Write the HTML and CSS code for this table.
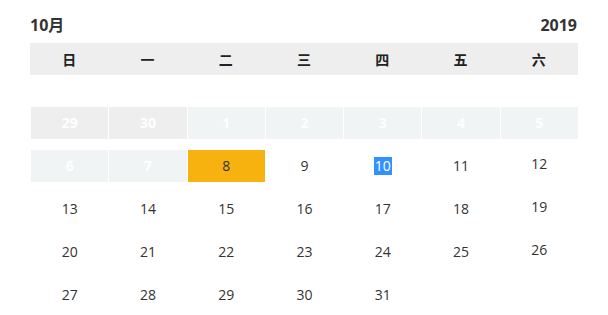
FILE: index.html
```html
<!DOCTYPE html>
<html lang="zh">
<head>
<meta charset="utf-8">
<link rel="stylesheet" href="styles.css">
</head>
<body>
<div class="cal">
  <div class="title">
    <span class="month">10月</span>
    <span class="year">2019</span>
  </div>
  <div class="week">
    <div>日</div><div>一</div><div>二</div><div>三</div><div>四</div><div>五</div><div>六</div>
  </div>
  <div class="days">
    <div class="d other">29</div>
    <div class="d other">30</div>
    <div class="d past">1</div>
    <div class="d past">2</div>
    <div class="d past">3</div>
    <div class="d past">4</div>
    <div class="d past">5</div>

    <div class="d past">6</div>
    <div class="d past">7</div>
    <div class="d today">8</div>
    <div class="d">9</div>
    <div class="d"><span class="sel">10</span></div>
    <div class="d">11</div>
    <div class="d sat">12</div>

    <div class="d">13</div>
    <div class="d">14</div>
    <div class="d">15</div>
    <div class="d">16</div>
    <div class="d">17</div>
    <div class="d">18</div>
    <div class="d sat">19</div>

    <div class="d">20</div>
    <div class="d">21</div>
    <div class="d">22</div>
    <div class="d">23</div>
    <div class="d">24</div>
    <div class="d">25</div>
    <div class="d sat">26</div>

    <div class="d">27</div>
    <div class="d">28</div>
    <div class="d">29</div>
    <div class="d">30</div>
    <div class="d">31</div>
    <div class="d"></div>
    <div class="d"></div>
  </div>
</div>
</body>
</html>
```

FILE: styles.css
```css
html, body {
  margin: 0;
  padding: 0;
  background: #ffffff;
}

body {
  font-family: "Open Sans", "Noto Sans CJK SC", sans-serif;
  color: #333333;
}

.cal {
  margin: 0 30px;
  padding-top: 13px;
}

.title {
  display: flex;
  justify-content: space-between;
  align-items: center;
  height: 24px;
  margin-bottom: 6px;
  font-size: 16px;
  font-weight: 700;
  line-height: 24px;
  color: #333333;
}

.month {
  font-family: "Open Sans", "Noto Sans CJK SC", sans-serif;
}

.year {
  margin-right: 1px;
}

.week {
  display: grid;
  grid-template-columns: repeat(7, 1fr);
  height: 32px;
  background: #eeeeee;
  font-family: "Noto Sans CJK SC", sans-serif;
  font-size: 14px;
  font-weight: 700;
  color: #222222;
}

.week div {
  display: flex;
  align-items: center;
  justify-content: center;
}

.days {
  display: grid;
  grid-template-columns: repeat(7, 1fr);
  grid-auto-rows: 32px;
  row-gap: 11px;
  margin-top: 32px;
  font-size: 14px;
}

.d {
  display: flex;
  align-items: center;
  justify-content: center;
  border-left: 1px solid #ffffff;
  color: #333333;
  line-height: 18px;
}

.d.other {
  background: #eeeeee;
  color: #ffffff;
  font-weight: 700;
}

.d.past {
  background: #f1f4f5;
  color: #ffffff;
  font-weight: 700;
}

.d.today {
  background: #f7b20f;
  color: #333333;
}

.d.sat {
  padding-bottom: 5px;
  box-sizing: border-box;
}

.sel {
  background: #3390ff;
  color: #ffffff;
  line-height: 18px;
  padding: 0 1px;
}
```
